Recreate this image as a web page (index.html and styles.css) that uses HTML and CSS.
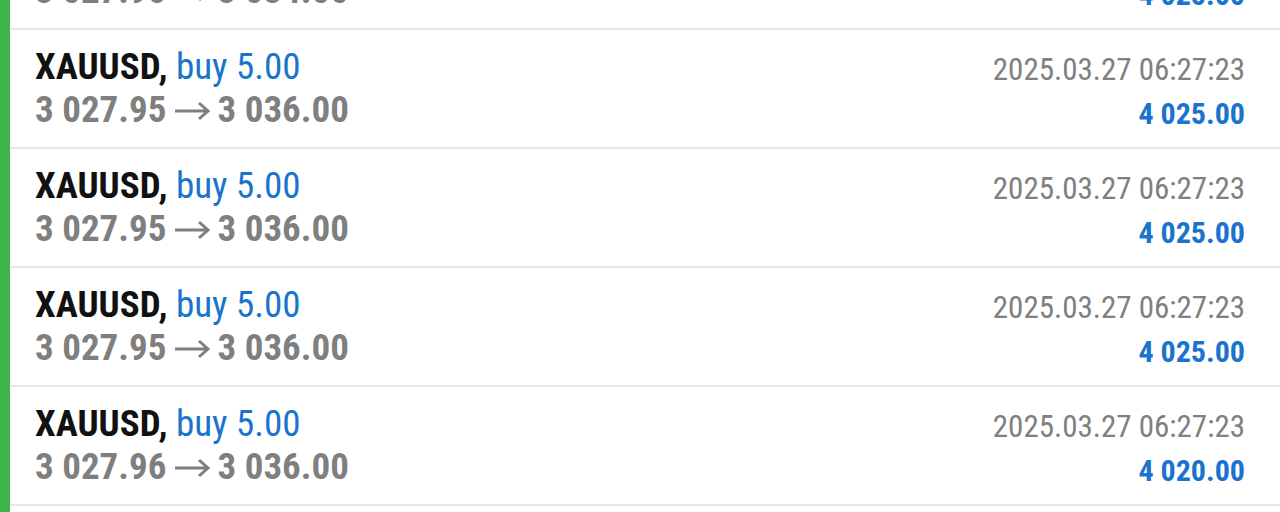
FILE: index.html
```html
<!DOCTYPE html>
<html>
<head>
<meta charset="utf-8">
<link rel="stylesheet" href="styles.css">
</head>
<body>
<div class="screen">
  <div class="accent"></div>
  <ul class="deals">
    <li class="deal">
      <div class="deal-main">
        <div class="line1"><span class="symbol">XAUUSD,</span> <span class="side">buy 5.00</span></div>
        <div class="prices"><span>3 027.95</span><svg class="arrow" viewBox="0 0 36 20" width="36" height="20"><path d="M1 10H34M25 2L34 10L25 18"/></svg><span>3 034.00</span></div>
      </div>
      <div class="deal-meta">
        <div class="time">2025.03.27 06:27:23</div>
        <div class="profit">4 025.00</div>
      </div>
    </li>
    <li class="deal">
      <div class="deal-main">
        <div class="line1"><span class="symbol">XAUUSD,</span> <span class="side">buy 5.00</span></div>
        <div class="prices"><span>3 027.95</span><svg class="arrow" viewBox="0 0 36 20" width="36" height="20"><path d="M1 10H34M25 2L34 10L25 18"/></svg><span>3 036.00</span></div>
      </div>
      <div class="deal-meta">
        <div class="time">2025.03.27 06:27:23</div>
        <div class="profit">4 025.00</div>
      </div>
    </li>
    <li class="deal">
      <div class="deal-main">
        <div class="line1"><span class="symbol">XAUUSD,</span> <span class="side">buy 5.00</span></div>
        <div class="prices"><span>3 027.95</span><svg class="arrow" viewBox="0 0 36 20" width="36" height="20"><path d="M1 10H34M25 2L34 10L25 18"/></svg><span>3 036.00</span></div>
      </div>
      <div class="deal-meta">
        <div class="time">2025.03.27 06:27:23</div>
        <div class="profit">4 025.00</div>
      </div>
    </li>
    <li class="deal">
      <div class="deal-main">
        <div class="line1"><span class="symbol">XAUUSD,</span> <span class="side">buy 5.00</span></div>
        <div class="prices"><span>3 027.95</span><svg class="arrow" viewBox="0 0 36 20" width="36" height="20"><path d="M1 10H34M25 2L34 10L25 18"/></svg><span>3 036.00</span></div>
      </div>
      <div class="deal-meta">
        <div class="time">2025.03.27 06:27:23</div>
        <div class="profit">4 025.00</div>
      </div>
    </li>
    <li class="deal">
      <div class="deal-main">
        <div class="line1"><span class="symbol">XAUUSD,</span> <span class="side">buy 5.00</span></div>
        <div class="prices"><span>3 027.96</span><svg class="arrow" viewBox="0 0 36 20" width="36" height="20"><path d="M1 10H34M25 2L34 10L25 18"/></svg><span>3 036.00</span></div>
      </div>
      <div class="deal-meta">
        <div class="time">2025.03.27 06:27:23</div>
        <div class="profit">4 020.00</div>
      </div>
    </li>
  </ul>
</div>
</body>
</html>
```
FILE: styles.css
```css
html, body {
  margin: 0;
  padding: 0;
  background: #ffffff;
}
body {
  font-family: "Roboto Condensed", "Liberation Sans Narrow", Roboto, sans-serif;
  font-stretch: condensed;
}
.screen {
  display: flex;
  width: 1280px;
  height: 512px;
  overflow: hidden;
  background: #ffffff;
}
.accent {
  flex: 0 0 10px;
  background: #3bb54a;
}
.deals {
  flex: 1;
  list-style: none;
  margin: -89px 0 0 0;
  padding: 0;
}
.deal {
  display: flex;
  justify-content: space-between;
  box-sizing: border-box;
  height: 119px;
  padding: 15px 35px 0 25px;
  border-bottom: 2px solid #e6e6e6;
}
.deal-main, .deal-meta {
  display: flex;
  flex-direction: column;
}
.deal-meta {
  align-items: flex-end;
  padding-top: 5px;
}
.line1 {
  font-size: 37px;
  line-height: 43px;
  white-space: nowrap;
}
.symbol {
  font-weight: 700;
  color: #111111;
}
.side {
  color: #1a73cc;
}
.prices {
  display: flex;
  align-items: center;
  font-size: 37px;
  line-height: 43px;
  font-weight: 700;
  color: #7f7f7f;
  white-space: nowrap;
}
.arrow {
  flex: 0 0 auto;
  margin: 0 7px 0 8px;
  position: relative;
  top: 1px;
  fill: none;
  stroke: #7f7f7f;
  stroke-width: 3;
}
.time {
  font-size: 31px;
  line-height: 40px;
  color: #808080;
  white-space: nowrap;
}
.profit {
  padding-top: 2px;
  font-size: 30px;
  line-height: 43px;
  font-weight: 700;
  color: #1a73cc;
  white-space: nowrap;
}
```
